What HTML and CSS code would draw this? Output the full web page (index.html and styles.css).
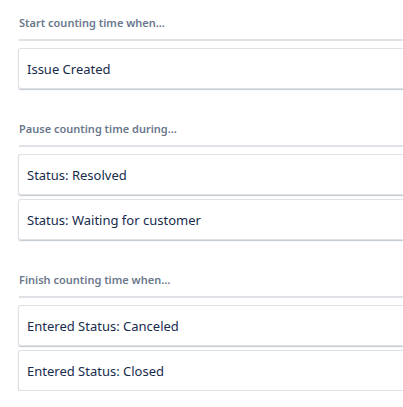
FILE: index.html
```html
<!DOCTYPE html>
<html lang="en">
<head>
    <meta charset="UTF-8">
    <title>Time to resolution</title>
    <link rel="stylesheet" href="styles.css">
</head>
<body>
    <div class="sla-config">
        <div class="sla-group">
            <div class="sla-title">Start counting time when...</div>
            <div class="sla-item">Issue Created</div>
        </div>

        <div class="sla-group">
            <div class="sla-title">Pause counting time during...</div>
            <div class="sla-item">Status: Resolved</div>
            <div class="sla-item">Status: Waiting for customer</div>
        </div>

        <div class="sla-group">
            <div class="sla-title">Finish counting time when...</div>
            <div class="sla-item">Entered Status: Canceled</div>
            <div class="sla-item">Entered Status: Closed</div>
        </div>
    </div>
</body>
</html>
```

FILE: styles.css
```css
body {
    margin: 0;
    background: #ffffff;
    font-family: "Noto Sans", "Open Sans", sans-serif;
}

.sla-config {
    display: flex;
    flex-direction: column;
    gap: 30px;
    padding: 13px 0 0 18px;
}

.sla-group {
    display: flex;
    flex-direction: column;
    gap: 4px;
}

.sla-title {
    margin-left: 1px;
    padding-top: 2px;
    padding-bottom: 8px;
    border-bottom: 2px solid #dfe1e6;
    margin-bottom: 3px;
    font-size: 11px;
    line-height: 16px;
    font-weight: 600;
    color: #6b778c;
}

.sla-item {
    box-sizing: border-box;
    height: 41px;
    display: flex;
    align-items: center;
    padding: 0 8px;
    border: 1px solid #dfe1e6;
    border-right: none;
    border-radius: 3px 0 0 3px;
    box-shadow: 0 1px 1px rgba(9, 30, 66, 0.25);
    font-size: 13px;
    color: #172b4d;
}
```
